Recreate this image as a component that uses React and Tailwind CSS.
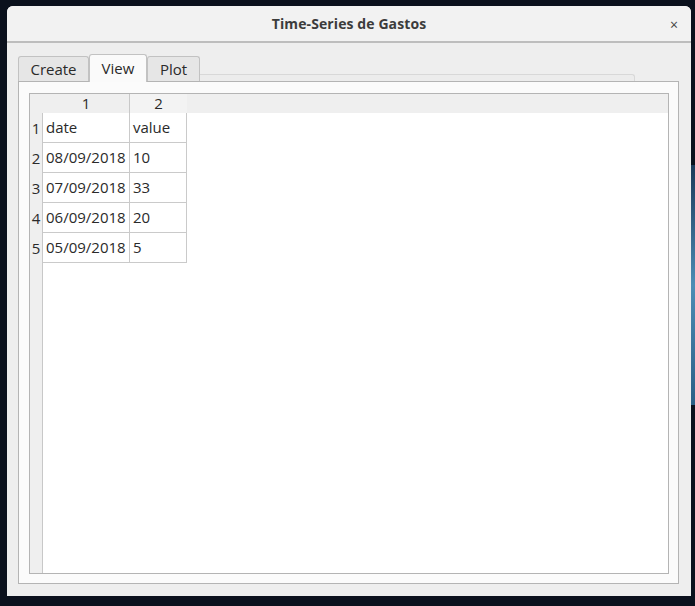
const rows = [
  ["date", "value"],
  ["08/09/2018", "10"],
  ["07/09/2018", "33"],
  ["06/09/2018", "20"],
  ["05/09/2018", "5"],
];

export default function App() {
  return (
    <div
      className="relative w-[695px] h-[606px] overflow-hidden bg-[#0b111d] pl-[7px] pt-[6px]"
      style={{ fontFamily: '"Open Sans", "Noto Sans", sans-serif' }}
    >
      {/* wallpaper streak peeking out on the right */}
      <div className="absolute right-0 top-[165px] w-[4px] h-[240px] bg-gradient-to-b from-[#1c3a5a] via-[#4d8db5] to-[#2b5f86]" />

      <div className="w-[684px] h-[590px] flex flex-col bg-[#eeeeee] rounded-t-[6px] overflow-hidden">
        {/* Title bar */}
        <div className="relative h-[37px] shrink-0 flex items-center justify-center bg-[#f2f2f2] border-b-2 border-[#bdbdbd]">
          <span className="text-[14px] font-bold text-[#3c3c3c] tracking-[0.1px]">Time-Series de Gastos</span>
          <span className="absolute right-[13px] top-[8px] text-[14px] text-[#444]">×</span>
        </div>

        {/* Body */}
        <div className="flex-1 flex flex-col pl-[11px] pr-[12px] pb-[12px] pt-[11px]">
          {/* Tabs */}
          <div className="flex items-end h-[27px] shrink-0">
            <Tab label="Create" w="w-[71px]" />
            <div className="w-[58px] h-[28px] -mb-[1px] z-10 bg-[#fafafa] border border-b-0 border-[#c2c2c2] rounded-t-[3px] flex items-center justify-center text-[15px] text-[#2a2a2a]">
              View
            </div>
            <Tab label="Plot" w="w-[53px]" />
            <div className="flex-1 mr-[44px] h-[7px] border-t border-r border-[#d8d8d8] rounded-tr-[3px] bg-[#ececec]" />
          </div>

          {/* Pane */}
          <div className="flex-1 border border-[#b4b4b4] bg-[#fbfbfb] pt-[11px] pl-[10px] pr-[9px] pb-[9px] flex">
            <div className="flex-1 border border-[#b4b4b4] bg-white flex flex-col text-[15px] text-[#2a2a2a]">
              {/* Header row */}
              <div className="flex h-[19px] bg-[#efefef]">
                <div className="w-[13px]" />
                <div className="w-[87px] border-r border-[#c8c8c8] flex items-center justify-center leading-none">1</div>
                <div className="w-[57px] bg-[#f3f3f3] flex items-center justify-center leading-none">2</div>
                <div className="flex-1" />
              </div>
              {/* Body */}
              <div className="flex-1 flex">
                <div className="w-[13px] bg-[#efefef] border-r border-[#c8c8c8] flex flex-col">
                  {rows.map((_, i) => (
                    <div key={i} className="h-[30px] flex items-center justify-center">{i + 1}</div>
                  ))}
                </div>
                <div className="flex flex-col">
                  {rows.map((r, i) => (
                    <div key={i} className="flex h-[30px] border-b border-[#cacaca]">
                      <div className="w-[87px] border-r border-[#cacaca] pl-[3px] flex items-center">{r[0]}</div>
                      <div className="w-[57px] border-r border-[#cacaca] pl-[3px] flex items-center">{r[1]}</div>
                    </div>
                  ))}
                </div>
              </div>
            </div>
          </div>
        </div>
      </div>
    </div>
  );
}

function Tab({ label, w }) {
  return (
    <div className={`${w} h-[25px] bg-[#e6e6e6] border border-b-0 border-[#c2c2c2] rounded-t-[3px] flex items-center justify-center text-[15px] text-[#2a2a2a]`}>
      {label}
    </div>
  );
}
